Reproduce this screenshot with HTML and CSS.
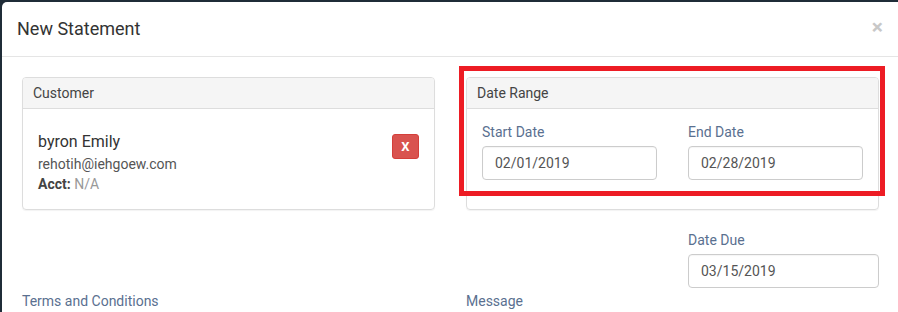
FILE: index.html
```html
<!DOCTYPE html>
<html lang="en">
<head>
  <meta charset="UTF-8" />
  <title>New Statement</title>
  <link rel="stylesheet" href="styles.css">
</head>
<body>

  <div class="modal">
    <div class="modal-header">
      <h4 class="modal-title">New Statement</h4>
      <span class="close">&times;</span>
    </div>

    <div class="modal-body">
      <div class="row">
        <div class="col">
          <div class="panel">
            <div class="panel-heading">Customer</div>
            <div class="panel-body customer">
              <div class="customer-info">
                <div class="name">byron Emily</div>
                <div class="email">rehotih@iehgoew.com</div>
                <div class="acct"><b>Acct:</b> <span class="muted">N/A</span></div>
              </div>
              <button class="btn-remove">X</button>
            </div>
          </div>
        </div>

        <div class="col col-dates">
          <div class="panel">
            <div class="panel-heading">Date Range</div>
            <div class="panel-body">
              <div class="pair">
                <div class="field">
                  <label>Start Date</label>
                  <input type="text" value="02/01/2019">
                </div>
                <div class="field">
                  <label>End Date</label>
                  <input type="text" value="02/28/2019">
                </div>
              </div>
            </div>
          </div>
          <div class="highlight"></div>

          <div class="pair due">
            <div></div>
            <div class="field">
              <label>Date Due</label>
              <input type="text" value="03/15/2019">
            </div>
          </div>
        </div>
      </div>

      <div class="row">
        <div class="col"><label>Terms and Conditions</label></div>
        <div class="col"><label>Message</label></div>
      </div>
    </div>
  </div>

</body>
</html>
```

FILE: styles.css
```css
* {
  box-sizing: border-box;
  margin: 0;
  padding: 0;
  font-family: 'Roboto', 'Liberation Sans', sans-serif;
}

body {
  background: #1f2c38;
  padding: 2px 0 0 2px;
  height: 312px;
  overflow: hidden;
}

.modal {
  background: #fff;
  width: 896px;
  height: 320px;
  border-radius: 5px 0 0 0;
}

.modal-header {
  display: flex;
  justify-content: space-between;
  align-items: center;
  height: 55px;
  padding: 0 15px 2px 15px;
  border-bottom: 1px solid #e5e5e5;
}

.modal-title {
  font-size: 18px;
  font-weight: 400;
  color: #333;
}

.close {
  font-size: 21px;
  font-weight: bold;
  color: #c8c8c8;
  line-height: 1;
  margin-bottom: 2px;
}

.modal-body {
  padding: 20px 0 0 20px;
}

.row {
  display: grid;
  grid-template-columns: 413px 413px;
  column-gap: 31px;
}

.col-dates {
  position: relative;
}

.panel {
  border: 1px solid #ddd;
  border-radius: 4px;
  box-shadow: 0 1px 1px rgba(0,0,0,0.05);
}

.panel-heading {
  background: #f5f5f5;
  border-bottom: 1px solid #ddd;
  border-radius: 3px 3px 0 0;
  padding: 6px 10px;
  height: 31px;
  font-size: 14px;
  line-height: 18px;
  color: #444;
}

.panel-body {
  padding: 13px 15px 29px 15px;
}

.customer {
  display: flex;
  justify-content: space-between;
  align-items: flex-start;
  padding: 22px 15px 15px 15px;
}

.name {
  font-size: 16px;
  line-height: 22px;
  color: #333;
  margin-bottom: 1px;
}

.email, .acct {
  font-size: 14px;
  line-height: 20px;
  color: #555;
}

.acct b {
  color: #444;
}

.muted {
  color: #999;
}

.btn-remove {
  margin-top: 3px;
  width: 27px;
  height: 25px;
  border: 1px solid #d43f3a;
  border-radius: 3px;
  background: #d9534f;
  color: #fff;
  font-weight: bold;
  font-size: 13px;
}

.pair {
  display: grid;
  grid-template-columns: minmax(0, 1fr) minmax(0, 1fr);
  column-gap: 31px;
}

.field {
  display: flex;
  flex-direction: column;
  min-width: 0;
}

label {
  display: block;
  font-size: 14px;
  line-height: 20px;
  color: #5a7090;
  margin-bottom: 4px;
}

input {
  width: 100%;
  height: 34px;
  border: 1px solid #ccc;
  border-radius: 4px;
  padding: 6px 12px;
  font-size: 14px;
  color: #555;
  box-shadow: inset 0 1px 1px rgba(0,0,0,0.04);
}

.due {
  margin-top: 20px;
  margin-bottom: 3px;
}

.highlight {
  position: absolute;
  left: -7px;
  top: -11px;
  width: 426px;
  height: 130px;
  border: 5px solid #ed1c24;
}
```
